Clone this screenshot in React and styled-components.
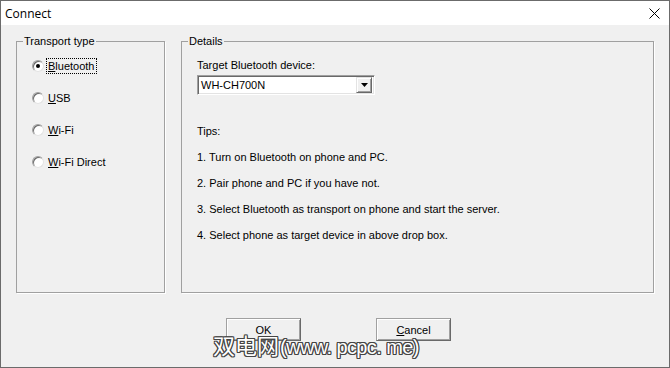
import React from "react";
import styled, { createGlobalStyle } from "styled-components";

const Global = createGlobalStyle`
  html, body { margin: 0; padding: 0; background: #f0f0f0; }
  body { font-family: "Liberation Sans", Arial, sans-serif; font-size: 11px; color: #000; }
  * { box-sizing: border-box; }
`;

const Window = styled.div`
  position: relative;
  width: 670px;
  height: 368px;
  border: 1px solid #6b6b6b;
  background: #f0f0f0;
  display: flex;
  flex-direction: column;
  overflow: hidden;
`;

const TitleBar = styled.div`
  height: 24px;
  background: #fff;
  display: flex;
  align-items: center;
  justify-content: space-between;
  padding: 0 9px 0 4px;
  font-family: "Segoe UI", "Open Sans", sans-serif;
  font-size: 12px;
  flex: none;
`;

const Title = styled.span`
  line-height: 16px;
  padding-top: 1px;
`;

const Body = styled.div`
  display: flex;
  gap: 16px;
  padding: 9px 15px 0 15px;
`;

const Group = styled.fieldset`
  margin: 0;
  height: 259px;
  width: ${p => p.$w}px;
  border: 1px solid #a0a0a0;
  box-shadow: 1px 1px 0 #fff;
  padding: 10px 15px 0 15px;
  min-width: 0;
`;

const Legend = styled.legend`
  margin-left: -9px;
  padding: 0 1px;
  line-height: 14px;
  font-size: 11px;
`;

const RadioList = styled.div`
  display: flex;
  flex-direction: column;
  gap: 16px;
`;

const RadioRow = styled.label`
  display: flex;
  align-items: center;
  height: 16px;
`;

const RadioCircle = styled.span`
  position: relative;
  width: 12px;
  height: 12px;
  border-radius: 50%;
  background: #fff;
  border: 1px solid;
  border-color: #a0a0a0 #e3e3e3 #e3e3e3 #a0a0a0;
  box-shadow: inset 1px 1px 0 #696969;
  flex: none;
  &::after {
    content: "";
    display: ${p => (p.$checked ? "block" : "none")};
    position: absolute;
    left: 3px;
    top: 3px;
    width: 4px;
    height: 4px;
    border-radius: 50%;
    background: #000;
  }
`;

const RadioText = styled.span`
  margin-left: 3px;
  padding: 0 1px;
  line-height: 14px;
  outline: ${p => (p.$focus ? "1px dotted #000" : "none")};
`;

const Key = styled.u`
  text-decoration: underline;
  text-underline-offset: 1px;
`;

const FieldLabel = styled.div`
  line-height: 14px;
`;

const Select = styled.div`
  margin-top: 3px;
  width: 178px;
  height: 20px;
  background: #fff;
  border: 1px solid;
  border-color: #a0a0a0 #fff #fff #a0a0a0;
  box-shadow: inset 1px 1px 0 #696969, inset -1px -1px 0 #e3e3e3;
  display: flex;
  align-items: center;
  justify-content: space-between;
  padding: 1px 2px 1px 3px;
`;

const SelectText = styled.span`
  line-height: 14px;
`;

const ArrowButton = styled.span`
  width: 16px;
  height: 16px;
  background: #f0f0f0;
  border: 1px solid;
  border-color: #e3e3e3 #696969 #696969 #e3e3e3;
  box-shadow: inset 1px 1px 0 #fff, inset -1px -1px 0 #a0a0a0;
  display: flex;
  align-items: center;
  justify-content: center;
`;

const Tips = styled.div`
  margin-top: 29px;
  display: flex;
  flex-direction: column;
  gap: 12px;
`;

const TipLine = styled.div`
  line-height: 14px;
`;

const Footer = styled.div`
  display: flex;
  gap: 75px;
  padding: 25px 0 0 225px;
`;

const Button = styled.button`
  width: 75px;
  height: 23px;
  margin: 0;
  padding: 0;
  font-family: "Liberation Sans", Arial, sans-serif;
  font-size: 11px;
  color: #000;
  background: #f0f0f0;
  border: 1px solid;
  border-color: #a0a0a0 #696969 #696969 #a0a0a0;
  box-shadow: inset 1px 1px 0 #fff, inset -1px -1px 0 #a0a0a0;
`;

const Watermark = styled.div`
  position: absolute;
  left: 212px;
  top: 329px;
  font-family: "Noto Sans CJK SC", "DejaVu Sans", sans-serif;
  font-size: 22px;
  line-height: 28px;
  color: #fff;
  white-space: pre;
  display: flex;
  align-items: baseline;
  text-shadow: -1px 0 #444, 1px 0 #444, 0 -1px #444, 0 1px #444, 1px 1px #444, -1px -1px #444, 1px -1px #444, -1px 1px #444;
`;

const WatermarkLatin = styled.span`
  font-family: "Liberation Sans", Arial, sans-serif;
  font-size: 20px;
  letter-spacing: -0.6px;
  margin-left: 1px;
`;

const radios = [
  { key: "B", rest: "luetooth", checked: true },
  { key: "U", rest: "SB" },
  { key: "W", rest: "i-Fi" },
  { key: "W", rest: "i-Fi Direct" },
];

const tips = [
  "1. Turn on Bluetooth on phone and PC.",
  "2. Pair phone and PC if you have not.",
  "3. Select Bluetooth as transport on phone and start the server.",
  "4. Select phone as target device in above drop box.",
];

export default function App() {
  return (
    <>
      <Global />
      <Window>
        <TitleBar>
          <Title>Connect</Title>
          <svg width="11" height="11" viewBox="0 0 11 11">
            <path d="M0.5 0.5 L10.5 10.5 M10.5 0.5 L0.5 10.5" stroke="#000" strokeWidth="1" />
          </svg>
        </TitleBar>
        <Body>
          <Group $w={149}>
            <Legend>Transport type</Legend>
            <RadioList>
              {radios.map((r, i) => (
                <RadioRow key={i}>
                  <RadioCircle $checked={r.checked} />
                  <RadioText $focus={r.checked}>
                    <Key>{r.key}</Key>
                    {r.rest}
                  </RadioText>
                </RadioRow>
              ))}
            </RadioList>
          </Group>
          <Group $w={473}>
            <Legend>Details</Legend>
            <FieldLabel>Target Bluetooth device:</FieldLabel>
            <Select>
              <SelectText>WH-CH700N</SelectText>
              <ArrowButton>
                <svg width="7" height="4" viewBox="0 0 7 4">
                  <path d="M0 0 H7 L3.5 4 Z" fill="#000" />
                </svg>
              </ArrowButton>
            </Select>
            <Tips>
              <TipLine>Tips:</TipLine>
              {tips.map(t => (
                <TipLine key={t}>{t}</TipLine>
              ))}
            </Tips>
          </Group>
        </Body>
        <Footer>
          <Button>OK</Button>
          <Button>
            <Key>C</Key>ancel
          </Button>
        </Footer>
        <Watermark>
          双电网<WatermarkLatin>(www. pcpc. me)</WatermarkLatin>
        </Watermark>
      </Window>
    </>
  );
}
